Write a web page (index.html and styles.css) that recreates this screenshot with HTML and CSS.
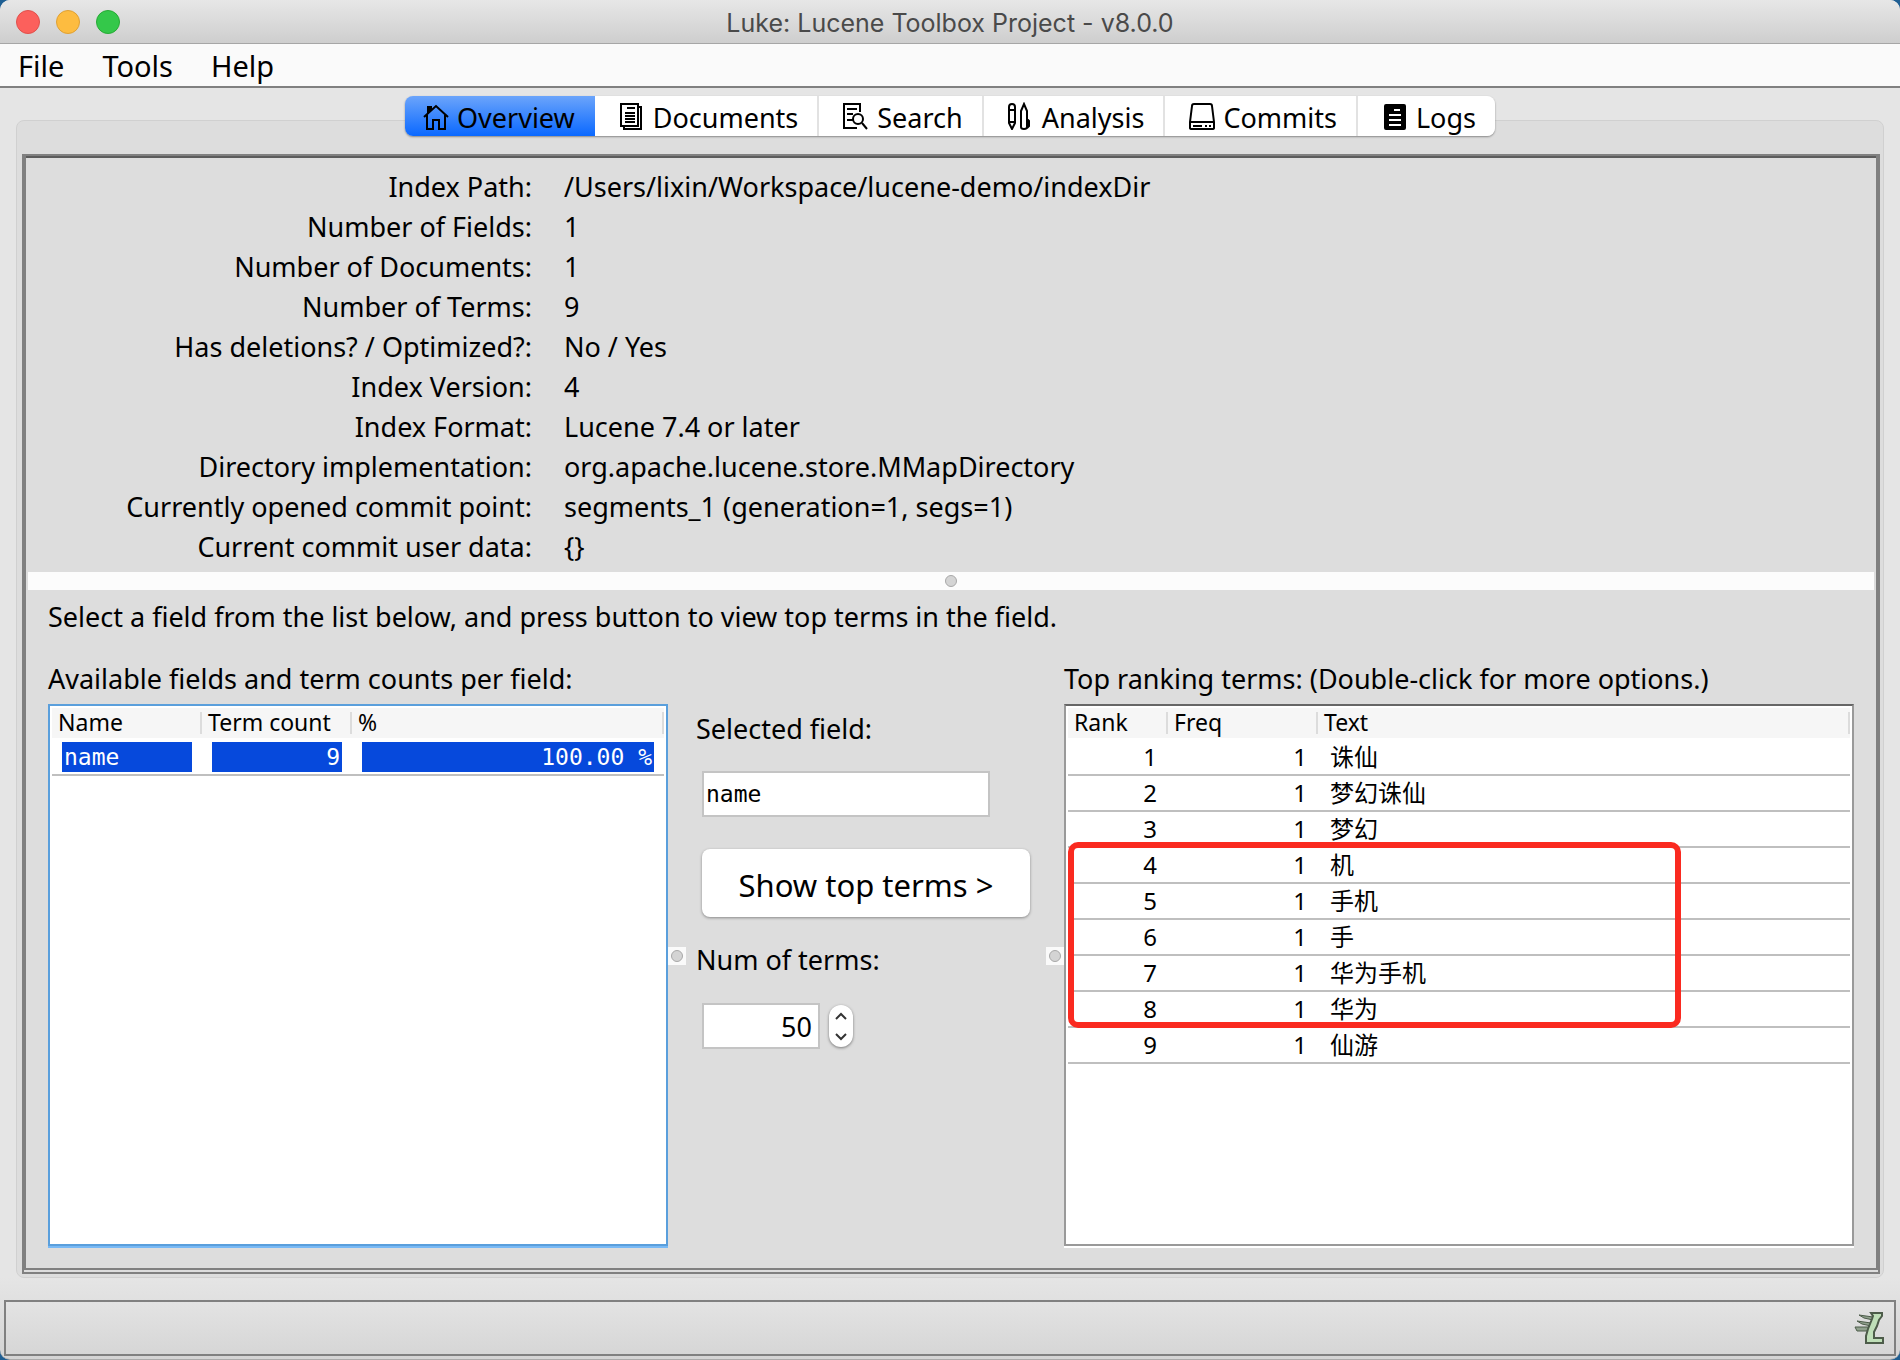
FILE: index.html
```html
<!DOCTYPE html>
<html lang="en">
<head>
<meta charset="utf-8">
<title>Luke: Lucene Toolbox Project - v8.0.0</title>
<link rel="stylesheet" href="styles.css">
</head>
<body>
<div class="window">
  <header class="titlebar">
    <div class="lights">
      <button class="light close" aria-label="Close"></button>
      <button class="light minimize" aria-label="Minimize"></button>
      <button class="light maximize" aria-label="Zoom"></button>
    </div>
    <h1 class="title">Luke: Lucene Toolbox Project - v8.0.0</h1>
  </header>
  <nav class="menubar">
    <button class="menu">File</button>
    <button class="menu">Tools</button>
    <button class="menu">Help</button>
  </nav>

  <main class="content">
    <div class="tabs" role="tablist">
      <button class="tab active" role="tab" aria-selected="true">
        <svg class="icon" viewBox="0 0 28 28"><path d="M1 15 13 4l12 11M4 13v14h6v-9h6v9h6V13"/><path class="solid" d="M5 10V5h3v3z"/></svg>Overview</button>
      <button class="tab" role="tab">
        <svg class="icon" viewBox="0 0 28 28"><path d="M2 2h17v22H2zM19 5h3v22H5v-3M8 6h8M6 11h10M6 14h10M6 17h10M6 20h10"/></svg>Documents</button>
      <button class="tab" role="tab">
        <svg class="icon" viewBox="0 0 28 28"><path d="M17 10V2H1v24h13M4 7h10M4 12h6M4 18h6M19 21l5 6"/><circle cx="15" cy="17" r="5"/></svg>Search</button>
      <button class="tab" role="tab">
        <svg class="icon" viewBox="0 0 28 28"><path d="M1 5q0-3 3-3t3 3v16l-3 6-3-6zM1 8h6M1 20h6M13 9l3-7 3 7v16q0 2-3 2t-3-2zM19 17l2 2v5l-2 2"/></svg>Analysis</button>
      <button class="tab" role="tab">
        <svg class="icon" viewBox="0 0 28 28"><path d="M5 2h16q2 0 2 2l2 16v6q0 1-2 1H3q-2 0-2-1v-6L3 4q0-2 2-2zM1 20h24M4 24h9M16 24h2M20 24h2"/></svg>Commits</button>
      <button class="tab" role="tab">
        <svg class="icon logs" viewBox="0 0 28 28"><rect x="3" y="3" width="20" height="24" rx="1"/><path d="M12 8h6M7 13h12M7 18h12M7 23h12"/></svg>Logs</button>
    </div>

    <section class="panel">
      <div class="split">
        <dl class="info">
          <dt>Index Path:</dt><dd>/Users/lixin/Workspace/lucene-demo/indexDir</dd>
          <dt>Number of Fields:</dt><dd>1</dd>
          <dt>Number of Documents:</dt><dd>1</dd>
          <dt>Number of Terms:</dt><dd>9</dd>
          <dt>Has deletions? / Optimized?:</dt><dd>No / Yes</dd>
          <dt>Index Version:</dt><dd>4</dd>
          <dt>Index Format:</dt><dd>Lucene 7.4 or later</dd>
          <dt>Directory implementation:</dt><dd>org.apache.lucene.store.MMapDirectory</dd>
          <dt>Currently opened commit point:</dt><dd>segments_1 (generation=1, segs=1)</dd>
          <dt>Current commit user data:</dt><dd>{}</dd>
        </dl>
        <div class="divider"><span class="dot"></span></div>
        <div class="terms">
          <p class="hint">Select a field from the list below, and press button to view top terms in the field.</p>
          <div class="columns">
            <section class="column">
              <h2 class="caption">Available fields and term counts per field:</h2>
              <div class="list focused">
                <table class="grid fields">
                  <colgroup><col class="w-field"><col class="w-field"><col></colgroup>
                  <thead><tr><th>Name</th><th>Term count</th><th>%</th></tr></thead>
                  <tbody><tr><td><span class="cell">name</span></td><td><span class="cell num">9</span></td><td><span class="cell num">100.00 %</span></td></tr></tbody>
                </table>
              </div>
            </section>
            <div class="grip"><span class="dot"></span></div>
            <form class="controls">
              <label class="label" for="field">Selected field:</label>
              <input class="text" id="field" type="text" value="name" readonly>
              <button class="show" type="button">Show top terms &gt;</button>
              <label class="label" for="count">Num of terms:</label>
              <div class="spinner">
                <input class="count" id="count" type="text" inputmode="numeric" value="50">
                <div class="stepper">
                  <button class="step" type="button" aria-label="Increase"><svg viewBox="0 0 12 8"><path d="M1 7l5-5 5 5"/></svg></button>
                  <button class="step" type="button" aria-label="Decrease"><svg viewBox="0 0 12 8"><path d="M1 1l5 5 5-5"/></svg></button>
                </div>
              </div>
            </form>
            <div class="grip"><span class="dot"></span></div>
            <section class="column ranking">
              <h2 class="caption">Top ranking terms: (Double-click for more options.)</h2>
              <div class="list">
                <table class="grid ranks">
                  <colgroup><col class="w-rank"><col class="w-freq"><col></colgroup>
                  <thead><tr><th>Rank</th><th>Freq</th><th>Text</th></tr></thead>
                  <tbody>
                    <tr><td>1</td><td>1</td><td>诛仙</td></tr>
                    <tr><td>2</td><td>1</td><td>梦幻诛仙</td></tr>
                    <tr><td>3</td><td>1</td><td>梦幻</td></tr>
                    <tr><td>4</td><td>1</td><td>机</td></tr>
                    <tr><td>5</td><td>1</td><td>手机</td></tr>
                    <tr><td>6</td><td>1</td><td>手</td></tr>
                    <tr><td>7</td><td>1</td><td>华为手机</td></tr>
                    <tr><td>8</td><td>1</td><td>华为</td></tr>
                    <tr><td>9</td><td>1</td><td>仙游</td></tr>
                  </tbody>
                </table>
                <div class="highlight"></div>
              </div>
            </section>
          </div>
        </div>
      </div>
    </section>
  </main>

  <footer class="status">
    <svg class="luke" viewBox="0 0 30 32"><path class="wing" d="M5 3l14 2v3l-9-2zM3 9l14 2v3L8 12zM1 15h16v4H3z"/><path class="leg" d="M17 1h11v3l-3 4-2 6-3 6v6h9v5H12v-7l2-7 4-10 1-3z"/></svg>
  </footer>
</div>
</body>
</html>
```
FILE: styles.css
```css
* { box-sizing: border-box; }
html, body { height: 100%; }
body {
  margin: 0;
  background: #1f5f93;
  color: #000;
  font-family: "Noto Sans", "Noto Sans CJK SC", sans-serif;
  font-size: 27px;
  line-height: 40px;
}
button, input { font: inherit; color: inherit; margin: 0; padding: 0; }
button { border: 0; background: none; }
h1, h2, p, dl, dd { margin: 0; font-weight: normal; font-size: inherit; }

.window {
  display: flex;
  flex-direction: column;
  min-height: 100%;
  background: linear-gradient(#e5e5e5 94%, #d4d4d4);
  border-bottom: 1px solid #aaa;
  border-radius: 10px;
  overflow: hidden;
}
.titlebar {
  display: grid;
  grid-template-columns: 1fr auto 1fr;
  align-items: center;
  height: 44px;
  padding: 0 16px;
  background: linear-gradient(#e7e7e7, #cecece);
  border-bottom: 1px solid #a6a6a6;
}
.lights { display: flex; gap: 16px; }
.light { width: 24px; height: 24px; border-radius: 50%; border: 1px solid; }
.close { background: #fc605c; border-color: #e0504c; }
.minimize { background: #fdbc40; border-color: #dfa033; }
.maximize { background: #34c84a; border-color: #27aa35; }
.title { padding-top: 2px; font-family: Inter, sans-serif; font-size: 25px; line-height: 32px; color: #4a4a4a; }

.menubar {
  display: flex;
  gap: 38px;
  height: 44px;
  padding: 1px 18px 0;
  background: #fafafa;
  border-bottom: 2px solid #808080;
}
.menu { font-size: 29px; }

.content { flex: 1; display: flex; flex-direction: column; padding: 8px 16px 22px; }
.tabs { display: flex; align-self: center; z-index: 1; margin-bottom: -16px; border-radius: 8px; box-shadow: 0 1px 2px #888; }
.tab {
  display: flex;
  align-items: center;
  gap: 6px;
  height: 40px;
  padding: 3px 19px 0 24px;
  background: #fff;
  border-left: 2px solid #e2e2e2;
}
.tab.active { padding-left: 18px; padding-right: 20px; border: 0; border-radius: 8px 0 0 8px; background: linear-gradient(#6ba4fb, #0a68ff); }
.active + .tab { border: 0; }
.tab:last-child { border-radius: 0 8px 8px 0; }
.icon { width: 28px; height: 28px; fill: none; stroke: #000; stroke-width: 2; margin-bottom: 4px; }
.solid, .logs rect { fill: #000; }
.logs path { stroke: #fff; }

.panel {
  flex: 1;
  display: flex;
  padding: 33px 3px 3px 5px;
  background: #ddd;
  border: 1px solid #d0d0d0;
  border-radius: 8px;
}
.split {
  flex: 1;
  display: flex;
  flex-direction: column;
  padding: 2px 2px 0;
  border: 4px solid #808080;
  border-top-width: 2px;
  border-bottom: 6px double #808080;
  box-shadow: inset 0 2px #5c5c5c;
}
.info {
  display: grid;
  grid-template-columns: 504px 1fr;
  column-gap: 32px;
  padding: 9px 0 5px;
}
.info dt { text-align: right; }
.divider { display: flex; justify-content: center; align-items: center; height: 18px; background: #fcfcfc; }
.dot { width: 12px; height: 12px; border-radius: 50%; background: #d4d4d4; border: 1px solid #a8a8a8; }

.terms { flex: 1; display: flex; flex-direction: column; padding: 7px 20px 20px; }
.hint { margin-bottom: 22px; }
.columns { flex: 1; display: flex; }
.column { display: flex; flex-direction: column; flex: 620 1 0; min-width: 0; }
.ranking { flex-grow: 790; }
.caption { margin-bottom: 5px; }
.list {
  flex: 1;
  position: relative;
  padding: 2px;
  background: #fff;
  border: 2px solid #999;
  border-top-color: #666;
  box-shadow: 0 2px #fff;
  margin-bottom: 2px;
}
.focused { border-color: #5a9fdc; box-shadow: 0 2px #78b9f5; }

.grid { width: 100%; border-collapse: collapse; table-layout: fixed; line-height: 30px; }
.w-field, .w-freq { width: 150px; }
.w-rank { width: 100px; }
.grid th {
  height: 31px;
  padding: 0 6px 2px;
  text-align: left;
  font-weight: normal;
  font-size: 23px;
  line-height: 28px;
  background: linear-gradient(#dcdcdc, #dcdcdc) right center / 2px 22px no-repeat #f6f6f6;
  border-bottom: 2px solid #fff;
}
.grid td { height: 36px; padding: 2px 12px; border-bottom: 2px solid #bfbfbf; font-size: 24px; }
.fields td { font-family: "DejaVu Sans Mono", monospace; font-size: 23px; padding: 2px 10px; }
.cell { display: block; padding: 0 2px; background: #0649dc; color: #fff; }
.num { text-align: right; }
.ranks td:nth-child(-n+2) { text-align: right; padding-right: 11px; }
.highlight {
  position: absolute;
  left: 2px;
  top: 136px;
  width: 78%;
  height: 186px;
  border: 6px solid #fa2a20;
  border-radius: 10px;
}

.grip { align-self: center; display: flex; align-items: center; justify-content: center; width: 18px; height: 18px; margin-top: 4px; background: #fafafa; }
.controls { width: 360px; padding: 50px 0 0 10px; display: flex; flex-direction: column; align-items: flex-start; }
.text, .count { height: 46px; background: #fff; border: 2px solid #c4c4c4; outline: 0; }
.text { width: 288px; margin: 22px 0 32px 6px; padding: 0 2px; font: 23px "DejaVu Sans Mono", monospace; }
.show { width: 328px; height: 68px; margin: 0 0 23px 6px; padding-top: 3px; border-radius: 8px; background: #fff; box-shadow: 0 1px 3px #888; font-size: 31px; }
.spinner { display: flex; align-items: center; gap: 9px; margin: 23px 0 0 6px; }
.count { width: 118px; padding: 0 6px; text-align: right; }
.stepper { display: flex; flex-direction: column; width: 24px; height: 42px; border-radius: 12px; background: #fff; box-shadow: 0 1px 3px #777; }
.step { flex: 1; display: flex; align-items: center; justify-content: center; }
.step svg { width: 12px; height: 8px; fill: none; stroke: #333; stroke-width: 2; }

.status {
  display: flex;
  align-items: center;
  justify-content: flex-end;
  height: 56px;
  margin: 0 4px 3px;
  padding: 0 10px;
  border: 2px solid #808080;
  background: linear-gradient(#e3e3e3, #d6d6d6);
}
.luke { width: 30px; height: 32px; stroke: #4d5c4a; stroke-width: 2; }
.wing { fill: #8fa08c; stroke-width: 1; }
.leg { fill: #bfdfb8; }
```
